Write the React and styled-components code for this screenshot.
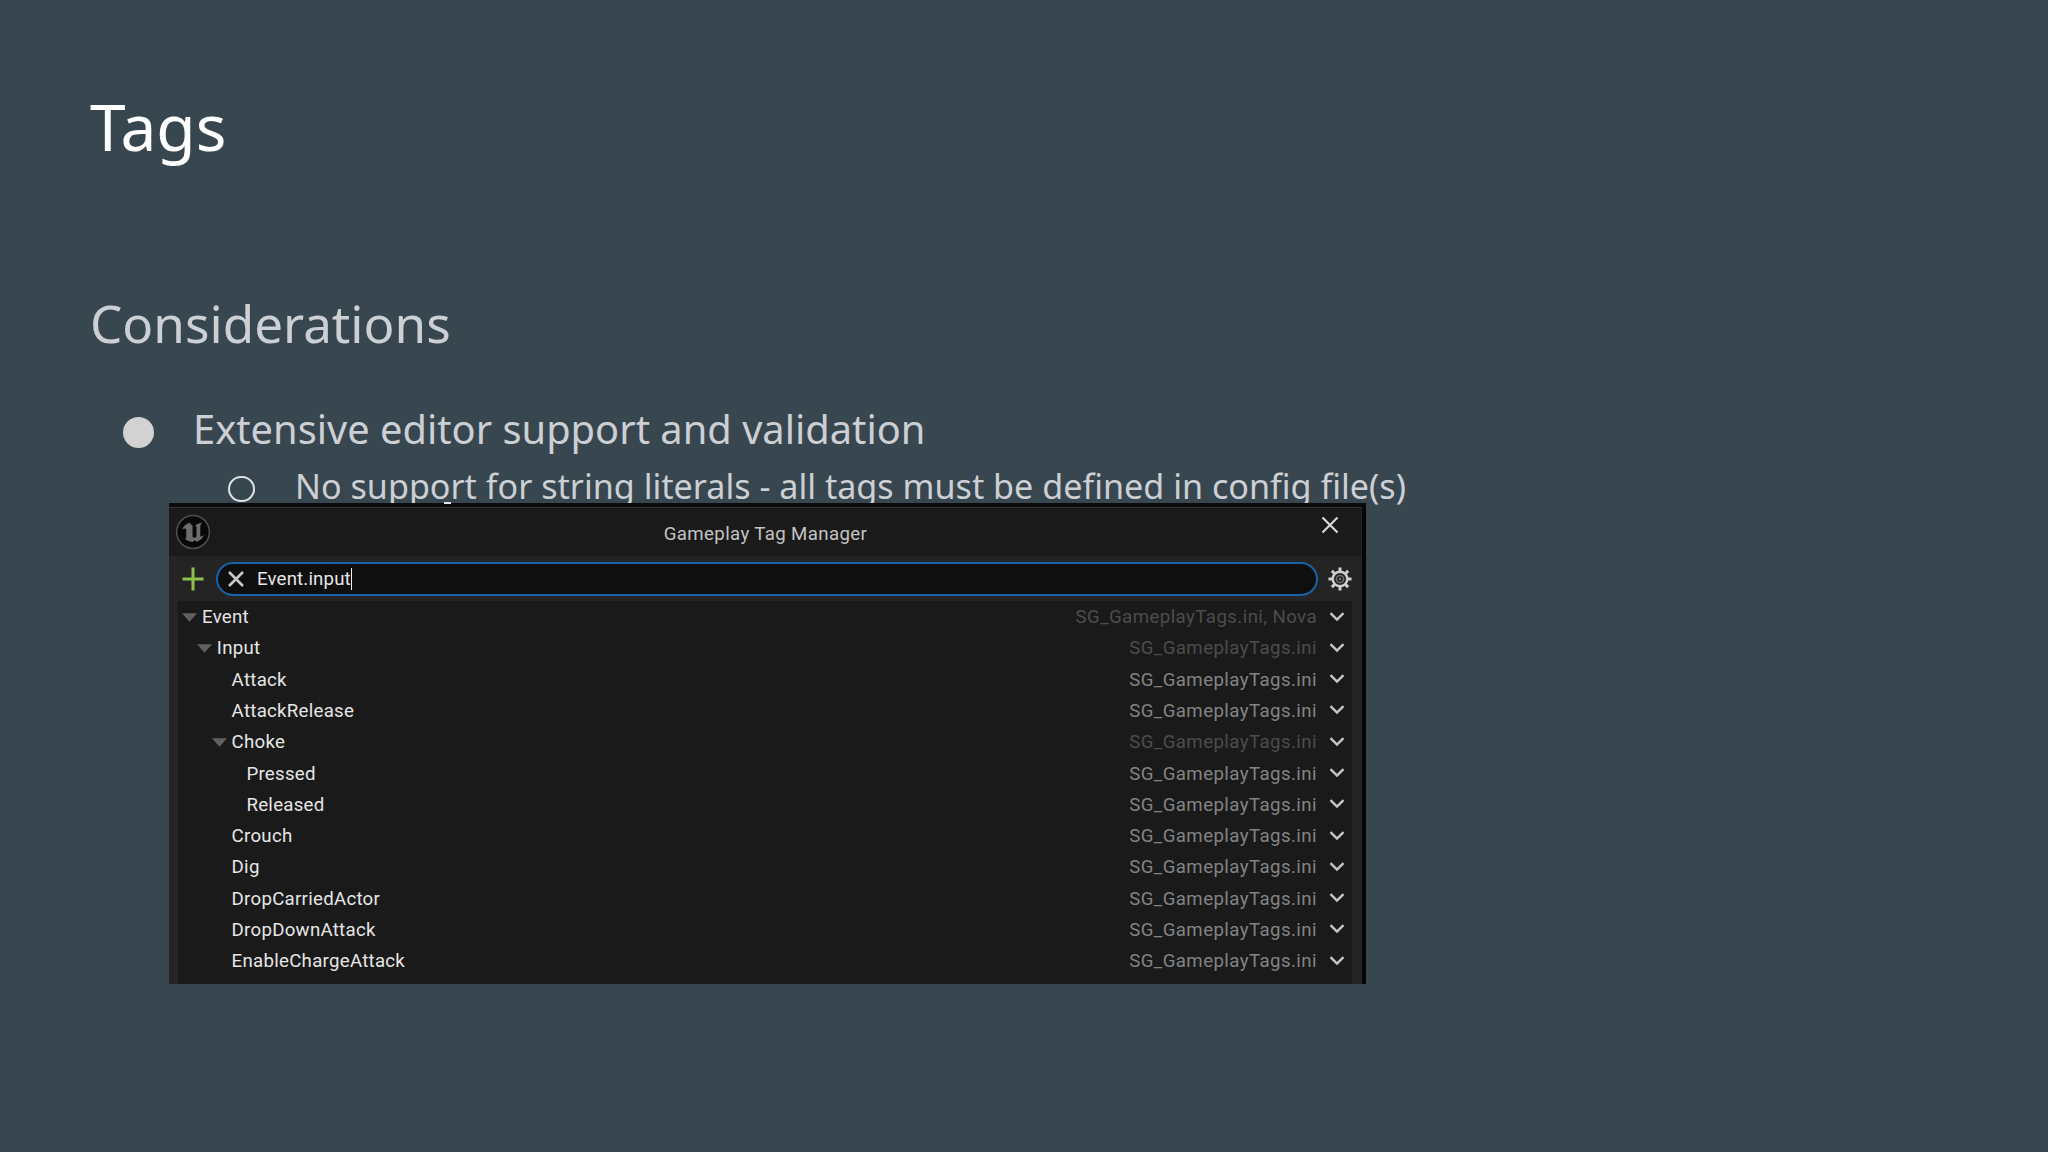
import React from 'react'
import styled, { createGlobalStyle } from 'styled-components'

const GlobalStyle = createGlobalStyle`
  body {
    margin: 0;
    background: #38474f;
    overflow: hidden;
  }
`

const Slide = styled.main`
  position: relative;
  box-sizing: border-box;
  width: 2048px;
  height: 1152px;
  padding: 83px 90px 0;
  overflow: hidden;
  background: #38474f;
  color: #cccfd4;
  font-family: 'Noto Sans', sans-serif;
`

const Title = styled.h1`
  margin: 0;
  font-size: 64px;
  font-weight: 400;
  line-height: 88px;
  color: #fff;
`

const Heading = styled.h2`
  margin: 116px 0 0;
  font-size: 51.2px;
  font-weight: 400;
  line-height: 72px;
`

const Bullets = styled.ul`
  margin: ${p => p.$nested ? '5px 0 0 1px' : '41px 0 0'};
  padding: 0;
  list-style: none;
`

const Bullet = styled.li`
  display: flex;
  align-items: center;
  height: ${p => p.$level === 2 ? 50 : 56}px;
  padding-left: ${p => p.$level === 2 ? 137 : 33}px;
  font-size: ${p => p.$level === 2 ? 34.13 : 39.82}px;
  white-space: nowrap;
`

const Dot = styled.span`
  flex: none;
  box-sizing: border-box;
  width: ${p => p.$hollow ? 26.5 : 31}px;
  height: ${p => p.$hollow ? 26.5 : 31}px;
  margin: ${p => p.$hollow ? '6px 40.5px 0 0' : '8px 39px 0 0'};
  border-radius: 50%;
  border: ${p => p.$hollow ? '2px solid #dfe1e3' : '0'};
  background: ${p => p.$hollow ? 'transparent' : '#d2d2d3'};
`

const Window = styled.section`
  position: absolute;
  left: 169px;
  top: 503px;
  box-sizing: border-box;
  width: 1197px;
  height: 481px;
  border-top: 4px solid #0b0b0b;
  border-right: 4px solid #050505;
  overflow: hidden;
  background: #242424;
  color: #e6e6e6;
  font-family: Roboto, sans-serif;
  font-size: 18.67px;
  letter-spacing: 0.27px;
`

const Spill = styled.span`
  position: absolute;
  left: 444px;
  top: 502px;
  width: 7px;
  height: 2px;
  background: #e4e6e8;
`

const TitleBar = styled.header`
  display: grid;
  grid-template-columns: 48px 1fr 62px;
  box-sizing: border-box;
  height: 49px;
  margin-right: 1px;
  border-top: 1px solid #343434;
  background: #1a1a1a;
`

const Logo = styled.svg`
  width: 36px;
  height: 36px;
  margin: 6px 0 0 6px;
`

const WindowTitle = styled.span`
  padding-left: 15px;
  line-height: 53px;
  text-align: center;
  color: #c3c3c3;
  letter-spacing: 0.37px;
`

const CloseIcon = styled.svg`
  width: 18px;
  height: 18px;
  margin: 8px 0 0 22px;
`

const Toolbar = styled.div`
  display: flex;
  align-items: center;
  box-sizing: border-box;
  height: 45px;
  padding: 1px 0 0 13px;
`

const PlusIcon = styled.svg`
  width: 22px;
  height: 24px;
  margin-right: 12px;
`

const Search = styled.div`
  display: flex;
  align-items: center;
  box-sizing: border-box;
  width: 1102px;
  height: 34px;
  padding-left: 10px;
  border: 2px solid #1762a8;
  border-radius: 17px;
  background: #0f0f0f;
  letter-spacing: 0.15px;
`

const ClearIcon = styled.svg`
  width: 16px;
  height: 16px;
  margin-right: 13px;
`

const Caret = styled.i`
  width: 1.5px;
  height: 22px;
  background: #f0f0f0;
`

const GearIcon = styled.svg`
  width: 24px;
  height: 24px;
  margin-left: 10px;
`

const TagList = styled.div`
  box-sizing: border-box;
  height: 384px;
  margin: 0 10px 0 9px;
  padding-top: 0.5px;
  background: #1a1a1a;
`

const Row = styled.div`
  display: flex;
  align-items: center;
  height: 31.29px;
  padding-left: ${p => 4 + p.$depth * 14.8}px;
  padding-right: 7px;
`

const Arrow = styled.svg`
  flex: none;
  width: 15px;
  height: 9px;
  margin: 1px 5px 0 0;
  visibility: ${p => p.$open ? 'visible' : 'hidden'};
`

const Source = styled.span`
  margin-left: auto;
  letter-spacing: 0.42px;
  color: ${p => p.$dim ? '#4c4c4c' : '#838383'};
`

const Chevron = styled.svg`
  width: 16px;
  height: 12px;
  margin: 0 0 1px 12px;
`

const FILE = 'SG_GameplayTags.ini'

const tags = [
  { name: 'Event', depth: 0, open: true, source: `${FILE}, Nova` },
  { name: 'Input', depth: 1, open: true },
  { name: 'Attack', depth: 2 },
  { name: 'AttackRelease', depth: 2 },
  { name: 'Choke', depth: 2, open: true },
  { name: 'Pressed', depth: 3 },
  { name: 'Released', depth: 3 },
  { name: 'Crouch', depth: 2 },
  { name: 'Dig', depth: 2 },
  { name: 'DropCarriedActor', depth: 2 },
  { name: 'DropDownAttack', depth: 2 },
  { name: 'EnableChargeAttack', depth: 2 },
]

const TagRow = ({ tag }) => (
  <Row $depth={tag.depth}>
    <Arrow $open={tag.open} viewBox="0 0 16 9"><path d="M0 0h16L8 9z" fill="#606060" /></Arrow>
    <span>{tag.name}</span>
    <Source $dim={tag.open}>{tag.source || FILE}</Source>
    <Chevron viewBox="0 0 16 12" fill="none" stroke="#c4c4c4" strokeWidth="2.5">
      <path d="M1.5 2.2L8 8.6l6.5-6.4" />
    </Chevron>
  </Row>
)

const UnrealLogo = () => (
  <Logo viewBox="0 0 36 36">
    <circle cx="18" cy="18" r="16.4" fill="#080808" stroke="#505050" strokeWidth="1.5" />
    <path
      d="M15.500 8.500C11.500 9.500 8.500 12 7 15.500c1.300-.9 2.300-1.200 3.200-.9.800.2 1 .8 1 1.600v6.800c0 1.100-.4 1.700-1.500 1.600 2 2 4.700 3.200 7.900 3.400l2-1.800 2.400 1.500c3-1 5.700-3.400 7-6.600-1.300 1.100-2.300 1.600-3 1.400-.5-.1-.7-.5-.7-1.100V12.300c0-1.500.8-2.700 2.200-3.800-3.200.4-5.600 1.500-7.300 3.400.9.100 1.300.5 1.300 1.300v9.300c-.8.800-1.600 1.200-2.400 1.200-1.100 0-1.600-.6-1.600-1.700V12c0-1.300-.8-1.800-2-1.500-.4-.7-.4-1.400 0-2z"
      fill="#6c6c6c"
    />
  </Logo>
)

const Gear = () => (
  <GearIcon viewBox="0 0 24 24" fill="none" stroke="#cfcfcf">
    <circle cx="12" cy="12" r="7.3" strokeWidth="2.4" />
    <circle cx="12" cy="12" r="3.6" stroke="#707070" strokeWidth="1.5" />
    <circle cx="12" cy="12" r="1.2" fill="#777" stroke="none" />
    {[0, 45, 90, 135, 180, 225, 270, 315].map(a => (
      <path key={a} d="M12 4.500V.5" strokeWidth="3" transform={`rotate(${a} 12 12)`} />
    ))}
  </GearIcon>
)

export default function App() {
  return (
    <Slide>
      <GlobalStyle />
      <Title>Tags</Title>
      <Heading>Considerations</Heading>
      <Bullets>
        <Bullet><Dot />Extensive editor support and validation</Bullet>
        <Bullets as="div" $nested>
          <Bullet as="div" $level={2}>
            <Dot $hollow />No support for string literals - all tags must be defined in config file(s)
          </Bullet>
        </Bullets>
      </Bullets>
      <Window>
        <TitleBar>
          <UnrealLogo />
          <WindowTitle>Gameplay Tag Manager</WindowTitle>
          <CloseIcon viewBox="0 0 18 18" stroke="#d6d6d6" strokeWidth="2.2">
            <path d="M1.5 1.5l15 15M16.5 1.5l-15 15" />
          </CloseIcon>
        </TitleBar>
        <Toolbar>
          <PlusIcon viewBox="0 0 22 24" stroke="#8bc24a" strokeWidth="3">
            <path d="M11 .5v23M.5 12h21" />
          </PlusIcon>
          <Search>
            <ClearIcon viewBox="0 0 16 16" stroke="#c9c9c9" strokeWidth="2.6">
              <path d="M1 1l14 14M15 1L1 15" />
            </ClearIcon>
            <span>Event.input</span>
            <Caret />
          </Search>
          <Gear />
        </Toolbar>
        <TagList>
          {tags.map(t => <TagRow key={t.name} tag={t} />)}
        </TagList>
      </Window>
      <Spill />
    </Slide>
  )
}
